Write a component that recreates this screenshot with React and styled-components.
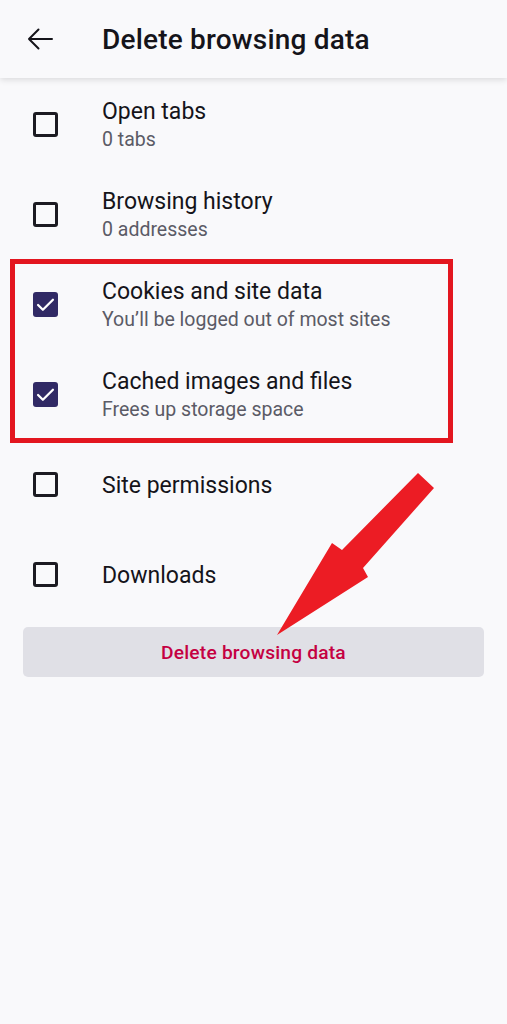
import React from 'react';
import styled, { createGlobalStyle } from 'styled-components';

const GlobalStyle = createGlobalStyle`
  html, body {
    margin: 0;
    padding: 0;
    background: #f9f9fb;
  }
  body {
    font-family: Roboto, "Noto Sans", "Liberation Sans", sans-serif;
    color: #15141a;
  }
`;

const Page = styled.div`
  width: 507px;
  min-height: 1024px;
  background: #f9f9fb;
  position: relative;
  overflow: hidden;
`;

const Toolbar = styled.header`
  height: 78px;
  display: flex;
  align-items: center;
  background: #f9f9fb;
  box-shadow: 0 2px 6px rgba(0, 0, 0, 0.12);
  position: relative;
  z-index: 1;
`;

const BackButton = styled.button`
  width: 80px;
  height: 78px;
  display: flex;
  align-items: center;
  justify-content: center;
  padding: 0;
  margin-right: 22px;
  background: none;
  border: none;
  color: #15141a;
`;

const Title = styled.h1`
  margin: 0;
  font-size: 28px;
  font-weight: 500;
  letter-spacing: 0.2px;
`;

const List = styled.div`
  position: relative;
  display: flex;
  flex-direction: column;
  padding-top: 1px;
`;

const Row = styled.label`
  height: 90px;
  display: flex;
  align-items: center;
`;

const BoxSlot = styled.div`
  width: 102px;
  display: flex;
  justify-content: flex-start;
  padding-left: 33px;
  box-sizing: border-box;
`;

const Box = styled.span`
  width: 25px;
  height: 25px;
  box-sizing: border-box;
  border-radius: 3px;
  display: flex;
  align-items: center;
  justify-content: center;
  border: ${({ checked }) => (checked ? 'none' : '3px solid #1c1b22')};
  background: ${({ checked }) => (checked ? '#312a65' : 'transparent')};
`;

const Texts = styled.div`
  display: flex;
  flex-direction: column;
  gap: 3px;
  padding-top: 2px;
`;

const RowTitle = styled.span`
  font-size: 23px;
  line-height: 27px;
  color: #15141a;
`;

const RowSub = styled.span`
  font-size: 19.5px;
  line-height: 24px;
  color: #5b5b66;
`;

const Highlight = styled.div`
  position: absolute;
  left: 10px;
  top: 181px;
  width: 443px;
  height: 184px;
  box-sizing: border-box;
  border: 5px solid #e3161f;
  pointer-events: none;
`;

const Footer = styled.div`
  padding: 8px 23px 0 23px;
`;

const DeleteButton = styled.button`
  width: 100%;
  height: 50px;
  border: none;
  border-radius: 5px;
  background: #e0e0e6;
  color: #c50042;
  font-family: Roboto, "Noto Sans", "Liberation Sans", sans-serif;
  font-size: 19.2px;
  font-weight: 500;
  letter-spacing: 0.2px;
`;

const Pointer = styled.svg`
  position: absolute;
  left: 0;
  top: 0;
  pointer-events: none;
  z-index: 2;
`;

const items = [
  { title: 'Open tabs', sub: '0 tabs', checked: false },
  { title: 'Browsing history', sub: '0 addresses', checked: false },
  { title: 'Cookies and site data', sub: 'You\u2019ll be logged out of most sites', checked: true },
  { title: 'Cached images and files', sub: 'Frees up storage space', checked: true },
  { title: 'Site permissions', checked: false },
  { title: 'Downloads', checked: false },
];

const CheckBox = ({ checked }) => (
  <Box checked={checked}>
    {checked && (
      <svg width="21" height="21" viewBox="0 0 24 24" fill="none">
        <path d="M3.5 12.5l5.5 5.5L20.5 6.5" stroke="#fff" strokeWidth="2.6" strokeLinecap="round" strokeLinejoin="round" />
      </svg>
    )}
  </Box>
);

export default function App() {
  return (
    <>
      <GlobalStyle />
      <Page>
        <Toolbar>
          <BackButton aria-label="Back">
            <svg width="28" height="28" viewBox="0 0 28 28" fill="none">
              <path d="M26 14H3M12.5 4.5L3 14l9.5 9.5" stroke="#15141a" strokeWidth="2" strokeLinecap="round" strokeLinejoin="round" />
            </svg>
          </BackButton>
          <Title>Delete browsing data</Title>
        </Toolbar>
        <List>
          {items.map((it) => (
            <Row key={it.title}>
              <BoxSlot>
                <CheckBox checked={it.checked} />
              </BoxSlot>
              <Texts>
                <RowTitle>{it.title}</RowTitle>
                {it.sub && <RowSub>{it.sub}</RowSub>}
              </Texts>
            </Row>
          ))}
          <Highlight />
        </List>
        <Footer>
          <DeleteButton>Delete browsing data</DeleteButton>
        </Footer>
        <Pointer width="507" height="1024" viewBox="0 0 507 1024">
          <polygon
            points="418,473 434,488 363,568 368,577 277,635 332,543 342,550"
            fill="#ec1c24"
          />
        </Pointer>
      </Page>
    </>
  );
}
